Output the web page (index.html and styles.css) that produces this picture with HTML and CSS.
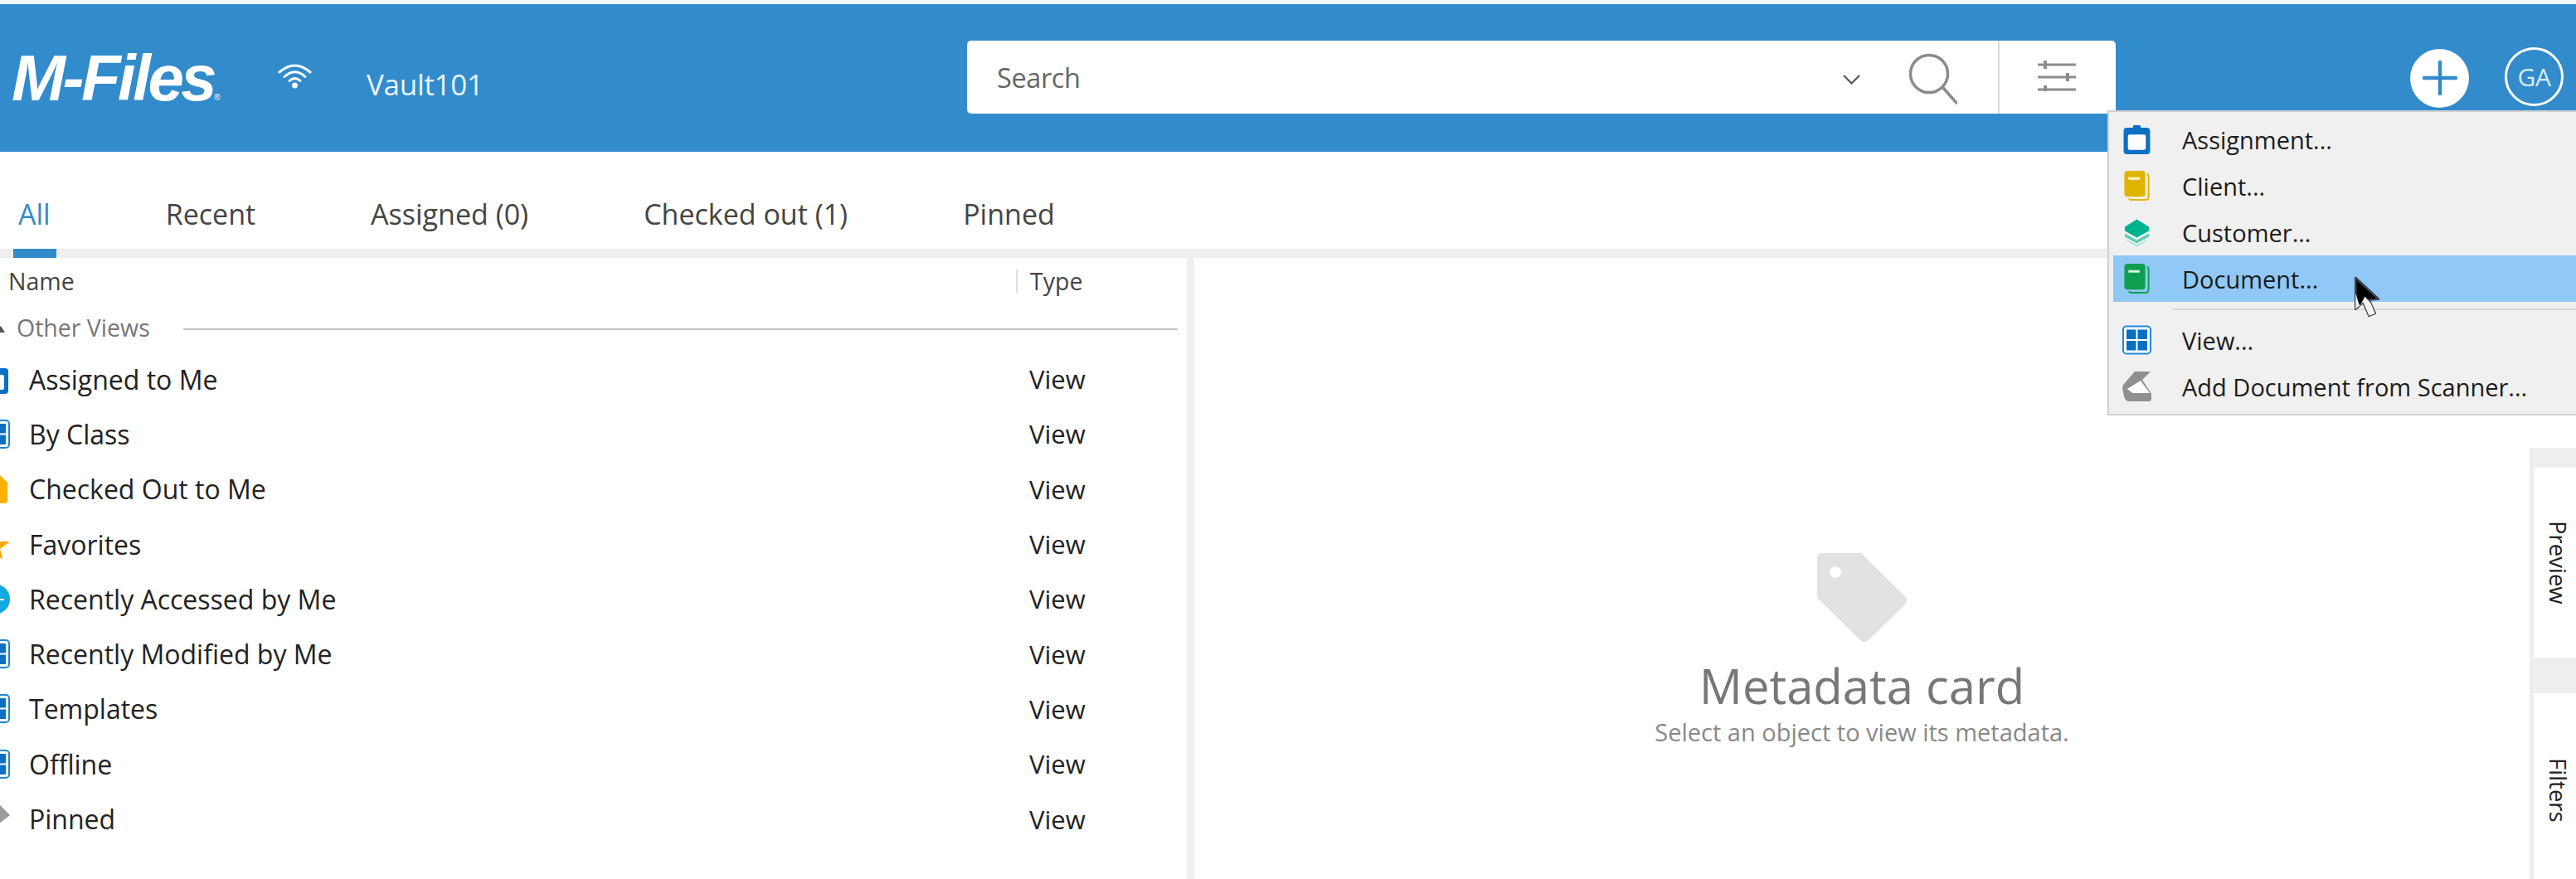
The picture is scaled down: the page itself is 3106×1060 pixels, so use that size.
FILE: index.html
```html
<!DOCTYPE html>
<html lang="en">
<head>
<meta charset="utf-8">
<title>M-Files</title>
<link rel="stylesheet" href="styles.css">
</head>
<body>
<svg class="defs" width="0" height="0" aria-hidden="true">
  <defs>
    <symbol id="i-assign" viewBox="0 0 31 35">
      <path d="M4 4h7V2.500Q11 1 12.500 1h6Q20 1 20 2.500V4h7q4 0 4 4v23q0 4-4 4H4q-4 0-4-4V8q0-4 4-4z" fill="#0b6fc4"/>
      <rect x="5" y="12" width="21" height="18" rx="2" fill="#fff"/>
    </symbol>
    <symbol id="i-view" viewBox="0 0 35 35">
      <rect x="1" y="1" width="33" height="33" rx="4" fill="#fff" stroke="#1f86d6" stroke-width="2"/>
      <rect x="5" y="5" width="11.500" height="11.500" fill="#0b6fc4"/>
      <rect x="18.500" y="5" width="11.500" height="11.500" fill="#0b6fc4"/>
      <rect x="5" y="18.500" width="11.500" height="11.500" fill="#0b6fc4"/>
      <rect x="18.500" y="18.500" width="11.500" height="11.500" fill="#0b6fc4"/>
    </symbol>
    <symbol id="i-tagdoc" viewBox="0 0 31 37">
      <path d="M28 4q2 0 2 3v25q0 4-4 4H9q-3 0-3-2" fill="none" stroke="currentColor" stroke-width="2"/>
      <rect x="0" y="0" width="26" height="32" rx="4" fill="currentColor"/>
      <rect x="5" y="8" width="14" height="3" fill="#fff" fill-opacity=".85"/>
    </symbol>
  </defs>
</svg>
<div class="strip"></div>
<header class="header">
  <div class="logo">M-Files<span class="logo-r">®</span></div>
  <svg class="wifi" viewBox="0 0 41 31" fill="none" stroke="#fff" stroke-width="3" stroke-linecap="round">
    <path d="M2 11Q20.500-5 39 11"/><path d="M8 16.500Q20.500 5 33 16.500"/><path d="M14 21.500Q20.500 15.500 27 21.500"/>
    <circle cx="20.500" cy="27" r="3.500" fill="#fff" stroke="none"/>
  </svg>
  <div class="vault">Vault101</div>
  <div class="search">
    <div class="search-text">Search</div>
    <svg class="chevron" viewBox="0 0 21 12" fill="none" stroke="#555" stroke-width="2.200"><path d="M1 1l9.500 9.500L20 1"/></svg>
    <svg class="magnifier" viewBox="0 0 58 62" fill="none" stroke="#8c8c8c" stroke-width="3.500" stroke-linecap="round"><circle cx="24" cy="25" r="22.500"/><path d="M41 42l16 18"/></svg>
    <div class="search-options">
      <svg class="sliders" viewBox="0 0 46 38" fill="none" stroke="#8c8c8c" stroke-width="3"><path d="M0 6h46M0 21h46M0 36h46"/><path stroke-width="4" d="M9 1v10M36 16v10M9 31v7"/></svg>
    </div>
  </div>
  <div class="add-btn">
    <svg class="add-plus" viewBox="0 0 42 42" fill="none" stroke="#328bcb" stroke-width="4.500" stroke-linecap="round"><path d="M21 2v38M2 21h38"/></svg>
  </div>
  <div class="avatar">GA</div>
</header>
<nav class="tabs">
  <span class="tab tab-active">All</span>
  <span class="tab">Recent</span>
  <span class="tab">Assigned (0)</span>
  <span class="tab">Checked out (1)</span>
  <span class="tab">Pinned</span>
</nav>
<div class="tab-band"><div class="tab-indicator"></div></div>
<main class="main">
  <section class="list">
    <div class="list-head">
      <span class="col-name">Name</span>
      <span class="col-type">Type</span>
    </div>
    <div class="group">
      <svg class="group-caret" viewBox="0 0 6 8"><path d="M-6 8L1 0l5 8z" fill="#555"/></svg>
      <span class="group-label">Other Views</span>
      <span class="group-line"></span>
    </div>
    <div class="row"><span class="row-name"><svg class="row-icon"><use href="#i-assign"/></svg>Assigned to Me</span><span class="row-type">View</span></div>
    <div class="row"><span class="row-name"><svg class="row-icon"><use href="#i-view"/></svg>By Class</span><span class="row-type">View</span></div>
    <div class="row"><span class="row-name"><svg class="row-icon" viewBox="0 0 35 35"><path d="M3 10L14 0h8l10 10v21q0 4-4 4H7q-4 0-4-4z" fill="#fbb000"/><circle cx="11" cy="13" r="2" fill="#fff"/></svg>Checked Out to Me</span><span class="row-type">View</span></div>
    <div class="row"><span class="row-name"><svg class="row-icon" viewBox="0 0 35 35"><path d="M12 3l6 11h17l-12 9 3 12-14-7-14 7 4-12L-8 14h14z" fill="#f5a800"/></svg>Favorites</span><span class="row-type">View</span></div>
    <div class="row"><span class="row-name"><svg class="row-icon" viewBox="0 0 35 35"><circle cx="17" cy="17.500" r="18" fill="#12a9e0"/><path d="M18 18h10" stroke="#fff" stroke-width="2"/></svg>Recently Accessed by Me</span><span class="row-type">View</span></div>
    <div class="row"><span class="row-name"><svg class="row-icon"><use href="#i-view"/></svg>Recently Modified by Me</span><span class="row-type">View</span></div>
    <div class="row"><span class="row-name"><svg class="row-icon"><use href="#i-view"/></svg>Templates</span><span class="row-type">View</span></div>
    <div class="row"><span class="row-name"><svg class="row-icon"><use href="#i-view"/></svg>Offline</span><span class="row-type">View</span></div>
    <div class="row"><span class="row-name"><svg class="row-icon" viewBox="0 0 35 35"><path d="M22 0l13 13-13 10-4 1-8-6z" fill="#9a9a9a"/></svg>Pinned</span><span class="row-type">View</span></div>
  </section>
  <div class="gutter"></div>
  <section class="meta">
    <svg class="meta-tag" viewBox="0 0 109 108"><path d="M6 0H53L106 52Q110 57 106 62L62 105Q57 109 52 105L2 56Q0 54 0 50V6Q0 0 6 0Z" fill="#e2e2e2"/><circle cx="22" cy="23" r="7" fill="#fff"/></svg>
    <h1 class="meta-title">Metadata card</h1>
    <p class="meta-sub">Select an object to view its metadata.</p>
  </section>
  <aside class="rail">
    <div class="rail-tracks">
      <div class="rail-tab">Preview</div>
      <div class="rail-tab rail-tab-last">Filters</div>
    </div>
  </aside>
</main>
<div class="menu">
  <div class="menu-row"><svg class="menu-icon"><use href="#i-assign"/></svg>Assignment...</div>
  <div class="menu-row"><svg class="menu-icon menu-client"><use href="#i-tagdoc"/></svg>Client...</div>
  <div class="menu-row"><svg class="menu-icon" viewBox="0 0 35 35"><path d="M17.500 2L32 11v5l-14.500 8L3 16v-5z" fill="#00b38f"/><path d="M3 19l14.500 8L32 19v4l-14.500 8L3 23z" fill="#5fd0b8"/><path d="M6 27l11.500 6L29 27v1l-11.500 7L6 28z" fill="#8fdfcd"/></svg>Customer...</div>
  <div class="menu-row menu-row-hot"><svg class="menu-icon menu-doc"><use href="#i-tagdoc"/></svg>Document...</div>
  <div class="menu-sep"></div>
  <div class="menu-row"><svg class="menu-icon"><use href="#i-view"/></svg>View...</div>
  <div class="menu-row"><svg class="menu-icon" viewBox="0 0 35 36"><path d="M15 0H34L24 10L35 27V33Q35 36 32 36H8Q4 36 2 30L0 20Q0 17 2 15Z" fill="#8f8f8f"/><path d="M6 21L22 11L33 26H12Z" fill="#fff"/></svg>Add Document from Scanner...</div>
</div>
<svg class="cursor" viewBox="0 0 30 50"><path d="M2 2V39L11 31L18 47L25 44L18 28L29 27Z" fill="#000" stroke="#3a3f48" stroke-width="2.500" stroke-linejoin="round"/><path d="M2 20V39L11 31L18 47L25 44L20 32L13 24L7 36Z" fill="#fff" fill-opacity=".95"/></svg>
</body>
</html>
```

FILE: styles.css
```css
* { box-sizing: border-box; }
html, body {
  margin: 0;
  padding: 0;
  width: 3106px;
  height: 1060px;
  overflow: hidden;
  background: #fff;
  font-family: "Open Sans", "Noto Sans", sans-serif;
  color: #222;
}
.defs { position: absolute; }
.strip { height: 5px; background: #f4f7fa; }

.header {
  height: 178px;
  background: #328bcb;
  display: flex;
  align-items: center;
  padding-left: 14px;
  color: #fff;
}
.logo {
  width: 249px;
  font-family: "Liberation Sans", sans-serif;
  font-weight: 700;
  font-style: italic;
  font-size: 78px;
  letter-spacing: -3.500px;
  line-height: 1;
  white-space: nowrap;
}
.logo-r { font-size: 10px; font-style: normal; font-weight: 400; letter-spacing: 0; }
.wifi { width: 41px; height: 31px; margin-left: 72px; margin-bottom: 5px; flex: none; }
.vault { width: 724px; margin-left: 66px; font-size: 35px; margin-top: 14px; letter-spacing: -.3px; color: #eaf4fb; }
.search {
  flex: none;
  width: 1385px;
  height: 88px;
  margin-bottom: 2px;
  background: #fff;
  border-radius: 5px;
  display: flex;
  align-items: center;
}
.search-text { flex: 1; padding-left: 36px; font-size: 32.500px; color: #666; letter-spacing: -.4px; }
.chevron { width: 21px; height: 12px; margin-right: 59px; margin-top: 6px; flex: none; }
.magnifier { width: 58px; height: 62px; margin-right: 49px; margin-top: 3px; flex: none; }
.search-options {
  width: 142px;
  height: 100%;
  border-left: 2px solid #ddd;
  padding-left: 46px;
  display: flex;
  align-items: center;
}
.sliders { width: 46px; height: 38px; margin-top: -5px; }
.add-btn {
  flex: none;
  width: 71px;
  height: 71px;
  margin-left: 355px;
  border-radius: 50%;
  background: #fff;
  display: flex;
  align-items: center;
  justify-content: center;
}
.add-plus { width: 42px; height: 42px; }
.avatar {
  flex: none;
  width: 71px;
  height: 71px;
  margin-left: 43px;
  margin-bottom: 3px;
  border-radius: 50%;
  border: 3px solid #fff;
  display: flex;
  align-items: center;
  justify-content: center;
  font-size: 30px;
  color: #d8ecfa;
  letter-spacing: -.5px;
}

.tabs {
  height: 117px;
  padding: 33px 0 0 22px;
  display: flex;
  align-items: center;
  gap: 139px;
  font-size: 34px;
  color: #444;
}
.tab-active { color: #328bcb; }
.tab-band { height: 11px; background: #eee; }
.tab-indicator { width: 52px; height: 100%; margin-left: 16px; background: #328bcb; }

.main { display: flex; height: 749px; }
.list { width: 1431px; flex: none; overflow: hidden; font-size: 32px; }
.list-head {
  height: 55px;
  display: flex;
  align-items: center;
  padding-left: 10px;
  font-size: 28.500px;
  color: #444;
}
.col-name { width: 1215px; }
.col-type { border-left: 2px solid #ddd; padding-left: 15px; line-height: 28px; }
.group { height: 58px; display: flex; align-items: center; font-size: 28.500px; color: #777; }
.group-caret { width: 6px; height: 8px; flex: none; margin-top: 4px; }
.group-label { margin-left: 14px; width: 201px; white-space: nowrap; }
.group-line { width: 1199px; height: 2px; margin-top: 4px; background: #c4c4c4; }
.row { height: 66.300px; display: flex; align-items: center; }
.row-name { width: 1241px; display: flex; align-items: center; }
.row-type { font-size: 31px; }
.row-icon { width: 35px; height: 35px; margin-left: -23px; margin-right: 23px; flex: none; }
.gutter { width: 9px; flex: none; background: #f0f0f0; }
.meta {
  flex: 1;
  display: flex;
  flex-direction: column;
  align-items: center;
  padding-top: 356px;
  color: #777;
}
.meta-tag { width: 109px; height: 108px; flex: none; }
.meta-title { margin: 16px 0 0; font-size: 58px; font-weight: 400; line-height: 72px; }
.meta-sub { margin: 0; font-size: 29px; line-height: 40px; color: #888; }
.rail { width: 56px; flex: none; }
.rail-tracks {
  margin-top: 229px;
  height: 520px;
  background: #eee;
  padding: 24px 0 0 5px;
  display: flex;
  flex-direction: column;
  gap: 43px;
}
.rail-tab {
  height: 229px;
  flex: none;
  background: #fff;
  display: flex;
  align-items: center;
  justify-content: center;
  padding-left: 7px;
  writing-mode: vertical-rl;
  font-size: 27.500px;
}
.rail-tab-last { height: 233px; }

.menu {
  position: absolute;
  left: 2541px;
  top: 133px;
  right: 0;
  height: 368px;
  background: #f0f0f0;
  border: 2px solid #d0d0d0;
  border-right: 0;
  padding: 5px 0 5px 5px;
  font-size: 29px;
  color: #1b1b1b;
}
.menu-row { height: 56px; display: flex; align-items: center; padding-left: 11px; }
.menu-row-hot { background: #90c8f6; }
.menu-icon { width: 35px; height: 36px; margin-right: 37px; flex: none; }
.menu-client { color: #e0b400; }
.menu-doc { color: #0fa04f; }
.menu-sep { height: 18px; margin-left: 72px; position: relative; }
.menu-sep::after { content: ""; display: block; height: 2px; margin-top: 8px; background: #d8d8d8; position: absolute; left: 0; right: 0; }
.cursor { position: absolute; left: 2838px; top: 333px; width: 31px; height: 51px; }
```
